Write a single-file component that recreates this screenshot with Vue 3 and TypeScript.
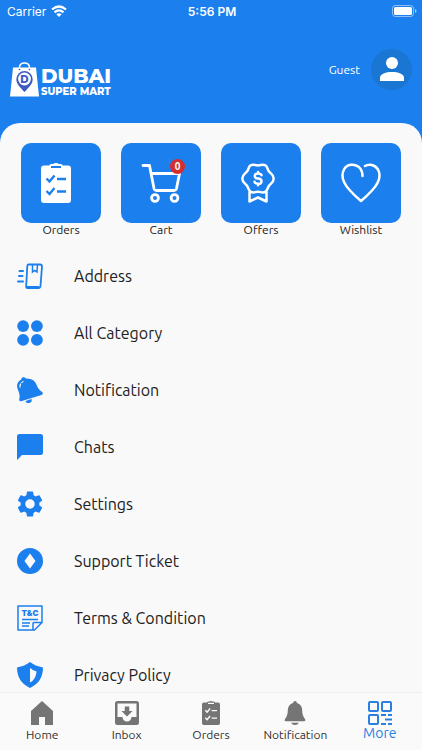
<script setup lang="ts">
import { ref } from 'vue'

interface Item {
  label: string
  icon: string
  box: string
  badge?: number
}

// 30 x 40 clipboard, shared by the shortcut tile and the tab bar
const clipboard =
  '<path fill="currentColor" fill-rule="evenodd" d="M3 2.500H8L9 1.500Q9.400 1 10.500 1H12Q13 0 15 0T18 1H19.500Q20.600 1 21 1.500L22 2.500H27Q30 2.500 30 5.500V37Q30 40 27 40H3Q0 40 0 37V5.500Q0 2.500 3 2.500ZM10 3V5H20V3Z"/><path fill="none" stroke="var(--check)" stroke-width="2.400" d="M5.500 15.500 8.500 18.500 13.500 12.500M16 16H25M5.500 28 8.500 31 13.500 25M16 28.500H25"/>'

const shortcuts: Item[] = [
  { label: 'Orders', box: '0 0 30 40', icon: clipboard },
  {
    label: 'Cart',
    box: '0 0 40 40',
    badge: 0,
    icon: '<g fill="none" stroke="currentColor" stroke-width="2.800" stroke-linecap="round" stroke-linejoin="round"><path d="M2 2.500H8.500L13 25.500Q13.500 27.500 15.500 27.500H33Q35 27.500 35.500 25.500L38.500 10.500H10.500"/><circle cx="14" cy="35" r="3.400"/><circle cx="33.500" cy="35" r="3.400"/></g>',
  },
  {
    label: 'Offers',
    box: '0 0 34 40',
    icon: '<g fill="none" stroke="currentColor" stroke-width="2.500" stroke-linejoin="round" stroke-linecap="round"><path d="M17 2.500C20 2.500 21 1 24 2.200C27 3.600 26 6 28 8.500C29.500 10.500 32.700 11.500 32.700 15.500S29.500 20.500 28 22.700C26 25.500 27 27.500 24 29C21 30.200 20 28.700 17 28.700S13 30.200 10 29C7 27.500 8 25.500 6 22.700C4.500 20.500 1.300 19.500 1.300 15.500S4.500 10.500 6 8.500C8 6 7 3.600 10 2.200C13 1 14 2.500 17 2.500ZM8.500 29V38.500L17 34.500L25.500 38.500V29"/><path d="M20.500 12.200Q20 10.500 17 10.500Q13.700 10.500 13.700 13T17 15.500T20.500 18.200T17 20.800Q14 20.800 13.500 18.800M17 9V10.500M17 20.800V22.300"/></g>',
  },
  {
    label: 'Wishlist',
    box: '0 0 40 40',
    icon: '<path fill="none" stroke="currentColor" stroke-width="2.500" stroke-linecap="round" stroke-linejoin="round" d="M21.500 13Q21.500 7 17.500 3.800C13 .500 6 1 3 6.500C-1 14 3 21 9 27.500Q14 33 20 38Q26 33 31 27.500C37 21 41 14 37 6.500C34 1.500 28 .500 24 3"/>',
  },
]

const menu: Item[] = [
  {
    label: 'Address',
    box: '0 0 26 26',
    icon: '<g fill="none" stroke="currentColor"><path stroke-width="1.800" stroke-linejoin="round" d="M11.500 1.500H23Q25 1.500 25 3.500L23.500 23Q23.300 25 21.500 25H10.500Q9 25 9.200 23L10.300 3Q10.400 1.500 11.500 1.500Z"/><path stroke-width="1.500" d="M15.500 1.500V9L17.700 7.500L20 9L20.500 1.500"/><path stroke-width="2" stroke-linecap="round" d="M2.500 8H6M2 13H5.500M1 18.500H6M10.500 24H21.500"/></g>',
  },
  {
    label: 'All Category',
    box: '0 0 26 26',
    icon: '<g fill="currentColor"><circle cx="6.100" cy="6.100" r="5.900"/><circle cx="19.900" cy="6.100" r="5.900"/><circle cx="6.100" cy="19.900" r="5.900"/><circle cx="19.900" cy="19.900" r="5.900"/></g>',
  },
  {
    label: 'Notification',
    box: '0 0 26 26',
    icon: '<path fill="currentColor" d="M4.300 2.500Q4 .800 6 .300T8.800 1.500Q17 1 19.500 7.500Q21 12.500 25.500 15.200Q26.500 17 24.500 18L4 24.200Q2 24.500 2.200 22.500Q3.500 18 1 13Q-2 6 4.300 2.500ZM8.500 24 14.500 22Q15.500 25 12.500 26T8.500 24Z"/><path d="M3 10.500Q2.500 6 6.500 4.500" fill="none" stroke="#f9f9f9" stroke-width="1.200" stroke-dasharray="4 1"/>',
  },
  {
    label: 'Chats',
    box: '0 0 26 26',
    icon: '<path fill="currentColor" d="M2.500 0H23.500Q26 0 26 2.500V18.500Q26 21 23.500 21H5L0 26V2.500Q0 0 2.500 0Z"/>',
  },
  {
    label: 'Settings',
    box: '2 2 20 20',
    icon: '<path fill="currentColor" d="M19.140 12.940c.04-.3.06-.61.06-.94 0-.32-.02-.64-.07-.94l2.030-1.580c.18-.14.23-.41.12-.61l-1.920-3.320c-.12-.22-.37-.29-.59-.22l-2.390.96c-.5-.38-1.030-.7-1.620-.94l-.36-2.540c-.04-.24-.24-.41-.48-.41h-3.840c-.24 0-.43.17-.47.41l-.36 2.540c-.59.24-1.130.57-1.620.94l-2.390-.96c-.22-.08-.47 0-.59.22L2.740 8.870c-.12.21-.08.47.12.61l2.030 1.580c-.05.3-.09.63-.09.94s.02.64.07.94l-2.030 1.580c-.18.14-.23.41-.12.61l1.920 3.320c.12.22.37.29.59.22l2.390-.96c.5.38 1.030.7 1.620.94l.36 2.540c.05.24.24.41.48.41h3.840c.24 0 .44-.17.47-.41l.36-2.540c.59-.24 1.130-.56 1.620-.94l2.390.96c.22.08.47 0 .59-.22l1.920-3.320c.12-.22.07-.47-.12-.61l-2.010-1.580zM12 15.600c-1.980 0-3.600-1.620-3.600-3.600s1.620-3.600 3.600-3.600 3.600 1.620 3.600 3.600-1.620 3.600-3.600 3.600z"/>',
  },
  {
    label: 'Support Ticket',
    box: '0 0 26 26',
    icon: '<path fill="currentColor" fill-rule="evenodd" d="M13 0A13 13 0 1 1 13 26A13 13 0 0 1 13 0ZM13 5.500L7.500 13L13 20.500L18.500 13Z"/>',
  },
  {
    label: 'Terms & Condition',
    box: '0 0 26 26',
    icon: '<path fill="none" stroke="currentColor" stroke-width="1.500" stroke-linejoin="round" d="M1 1H25V17.500L17.500 25H1ZM25 17.500H17Q16 17.500 16 18.500V25M5 14.500H21M5 18H13M5 21H12"/><text x="13" y="10.500" text-anchor="middle" fill="currentColor" font-family="Inter, sans-serif" font-size="8" font-weight="900">T&amp;C</text>',
  },
  {
    label: 'Privacy Policy',
    box: '0 0 26 26',
    icon: '<path fill="currentColor" fill-rule="evenodd" d="M13 0Q18 4 26 5.500Q26 20 13 26Q0 20 0 5.500Q8 4 13 0ZM13 6V20.500Q19 17.500 19.500 9.500Q16 8.500 13 6Z"/>',
  },
]

const tabs: Item[] = [
  { label: 'Home', box: '0 0 22 24', icon: '<path fill="currentColor" d="M11 0 22 10V24H14V16H8V24H0V10Z"/>' },
  {
    label: 'Inbox',
    box: '0 0 24 24',
    icon: '<path fill="currentColor" fill-rule="evenodd" d="M2.500 0H21.500Q24 0 24 2.500V21.500Q24 24 21.500 24H2.500Q0 24 0 21.500V2.500Q0 0 2.500 0ZM2.500 2.500V16H7.500A4.500 4.500 0 0 0 16.500 16H21.500V2.500ZM9.750 5.500H14.250V10H17.500L12 15.500L6.500 10H9.750Z"/>',
  },
  { label: 'Orders', box: '0 0 30 40', icon: clipboard },
  {
    label: 'Notification',
    box: '0 0 22 25',
    icon: '<path fill="currentColor" d="M9 2Q9 0 11 0T13 2Q18.500 3.500 18.500 10Q18.500 15.500 21.500 19Q22.500 21 20.500 21H1.500Q-.500 21 .500 19Q3.500 15.500 3.500 10Q3.500 3.500 9 2ZM7 22.700H15Q14 25 11 25T7 22.700Z"/>',
  },
  {
    label: 'More',
    box: '0 0 24 24',
    icon: '<g fill="none" stroke="currentColor" stroke-width="2"><rect x="1" y="1" width="9" height="9" rx="1"/><rect x="14" y="1" width="9" height="9" rx="1"/><rect x="1" y="14" width="9" height="9" rx="1"/><path d="M13 14H18M20 14H24M17 18.500H24M13 23H18M20 23H24"/></g>',
  },
]

const active = ref('More')
</script>

<template>
  <div class="app">
    <header class="top">
      <div class="status">
        <span class="carrier">
          Carrier
          <svg class="wifi" viewBox="0 0 16 12" aria-hidden="true">
            <g fill="none" stroke="#fff" stroke-width="2.200">
              <path d="M1 4.500Q8 -1.500 15 4.500" />
              <path d="M3.500 7.300Q8 3.500 12.500 7.300" />
            </g>
            <path fill="#fff" d="M8 12 5.300 9.300Q8 7 10.700 9.300Z" />
          </svg>
        </span>
        <span class="time">5:56 PM</span>
        <svg class="battery" viewBox="0 0 25 12" aria-hidden="true">
          <rect x=".5" y=".5" width="21" height="11" rx="3" fill="none" stroke="#fff" stroke-opacity=".5" />
          <rect x="2" y="2" width="18" height="8" rx="1.500" fill="#fff" />
          <path d="M23 4Q24.500 4.500 24.500 6T23 8Z" fill="#fff" fill-opacity=".6" />
        </svg>
      </div>
      <div class="brand-row">
        <div class="logo">
          <svg class="bag" viewBox="0 0 29 35" aria-hidden="true">
            <path d="M9.500 7V5Q10 1 14.500 1T19.500 5V7" fill="none" stroke="#fff" stroke-width="1.500" />
            <path d="M3 5.500H26L29 34.500H0Z" fill="#fff" />
            <path fill="#3c5cc0" d="M14.500 9A8.200 8.200 0 0 0 6.300 17.200C6.300 22 10.500 25.500 14.500 30C18.500 25.500 22.700 22 22.700 17.200A8.200 8.200 0 0 0 14.500 9Z" />
            <circle cx="14.500" cy="17" r="6.400" fill="#fff" />
            <text x="14.500" y="20.500" text-anchor="middle" class="bag-letter">D</text>
            <g fill="#3c5cc0"><circle cx="9.500" cy="7.500" r=".8" /><circle cx="19.500" cy="7.500" r=".8" /></g>
          </svg>
          <div class="brand">
            <span class="brand-main">DUBAI</span>
            <span class="brand-sub">SUPER MART</span>
          </div>
        </div>
        <a class="user" href="#profile">
          <span>Guest</span>
          <span class="avatar">
            <svg viewBox="0 0 24 24" aria-hidden="true">
              <circle cx="12" cy="6" r="6" fill="#fff" />
              <path d="M0 24V20.500C0 17 6 15 12 15S24 17 24 20.500V24Z" fill="#fff" />
            </svg>
          </span>
        </a>
      </div>
    </header>

    <main class="panel">
      <nav class="shortcuts" aria-label="Shortcuts">
        <a v-for="s in shortcuts" :key="s.label" class="shortcut" :href="'#' + s.label">
          <span class="tile">
            <svg :viewBox="s.box" preserveAspectRatio="xMinYMid meet" aria-hidden="true" v-html="s.icon"></svg>
            <span v-if="s.badge !== undefined" class="badge">{{ s.badge }}</span>
          </span>
          <span class="shortcut-label">{{ s.label }}</span>
        </a>
      </nav>
      <ul class="menu">
        <li v-for="m in menu" :key="m.label">
          <a class="row" href="#">
            <svg :viewBox="m.box" aria-hidden="true" v-html="m.icon"></svg>
            <span>{{ m.label }}</span>
          </a>
        </li>
      </ul>
    </main>

    <nav class="tabs" aria-label="Main">
      <button
        v-for="t in tabs"
        :key="t.label"
        type="button"
        class="tab"
        :class="{ active: active === t.label }"
        @click="active = t.label"
      >
        <svg :viewBox="t.box" aria-hidden="true" v-html="t.icon"></svg>
        <span>{{ t.label }}</span>
      </button>
    </nav>
  </div>
</template>

<style>
body {
  margin: 0;
  background: #f9f9f9;
}
</style>

<style scoped>
.app {
  --blue: #1c7fee;
  display: flex;
  flex-direction: column;
  height: 100vh;
  overflow: hidden;
  background: var(--blue);
  color: #212121;
  font-family: Ubuntu, "Noto Sans", sans-serif;
}
a {
  color: inherit;
  text-decoration: none;
}
.top {
  flex: none;
  color: #fff;
}
.status {
  display: grid;
  grid-template-columns: 1fr auto 1fr;
  align-items: center;
  height: 22px;
  padding: 0 5px 0 7px;
  font-family: Inter, sans-serif;
  font-size: 12px;
}
.carrier {
  display: flex;
  align-items: center;
  gap: 5px;
}
.wifi {
  width: 16px;
  height: 12px;
}
.time {
  font-weight: 600;
}
.battery {
  justify-self: end;
  width: 25px;
  height: 12px;
}
.brand-row {
  display: flex;
  align-items: flex-start;
  justify-content: space-between;
  padding: 26px 10px;
}
.logo {
  display: flex;
  align-items: flex-end;
  gap: 2px;
  padding-top: 14px;
}
.bag {
  width: 29px;
  height: 35px;
}
.bag-letter {
  fill: #3c5cc0;
  font: 800 10px Montserrat, Inter, sans-serif;
}
.brand {
  display: flex;
  flex-direction: column;
  font-family: Montserrat, Inter, sans-serif;
  font-weight: 800;
}
.brand-main {
  font-size: 20px;
  line-height: 22px;
}
.brand-sub {
  font-size: 10px;
  line-height: 10px;
}
.user {
  display: flex;
  align-items: center;
  gap: 11px;
  height: 42px;
  font-size: 12px;
}
.avatar {
  display: flex;
  align-items: center;
  justify-content: center;
  width: 41px;
  height: 41px;
  border-radius: 50%;
  background: #1976d2;
}
.avatar svg {
  width: 24px;
  height: 24px;
}
.panel {
  flex: 1;
  min-height: 0;
  overflow: hidden;
  border-radius: 20px 20px 0 0;
  background: #f9f9f9;
}
.shortcuts {
  display: grid;
  grid-template-columns: repeat(4, 1fr);
  padding: 20px 11px 0;
}
.shortcut {
  display: flex;
  flex-direction: column;
  align-items: center;
}
.tile {
  --check: var(--blue);
  position: relative;
  display: flex;
  align-items: center;
  justify-content: center;
  width: 80px;
  height: 80px;
  border-radius: 10px;
  background: var(--blue);
  color: #fff;
}
.tile svg {
  width: 40px;
  height: 40px;
}
.badge {
  position: absolute;
  top: 16px;
  right: 16px;
  width: 15px;
  height: 15px;
  border-radius: 50%;
  background: #d32f2f;
  font-size: 10px;
  font-weight: 600;
  line-height: 15px;
  text-align: center;
}
.shortcut-label {
  font-size: 12px;
  line-height: 14px;
}
.menu {
  margin: 0;
  padding: 10px 0 0;
  list-style: none;
}
.row {
  display: flex;
  align-items: center;
  gap: 31px;
  height: 57px;
  padding: 0 17px;
  font-size: 16px;
}
.row svg {
  width: 26px;
  height: 26px;
  color: var(--blue);
}
.tabs {
  flex: none;
  display: grid;
  grid-template-columns: repeat(5, 1fr);
  height: 57px;
  border-top: 1px solid #eee;
  background: #fafafa;
}
.tab {
  --check: #fafafa;
  display: flex;
  flex-direction: column;
  align-items: center;
  gap: 2px;
  padding: 8px 0 0;
  border: 0;
  background: none;
  color: #757575;
  font-family: inherit;
  font-size: 12px;
  line-height: 16px;
}
.tab svg {
  width: 24px;
  height: 24px;
}
.tab span {
  color: #303030;
}
.tab.active,
.tab.active span {
  color: #2a80e0;
}
.tab.active {
  gap: 0;
  font-size: 14px;
}
</style>
